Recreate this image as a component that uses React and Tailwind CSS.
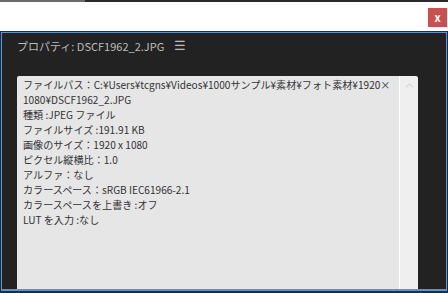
import { ChevronUp } from "lucide-react";

const lines = [
    "ファイルパス：C:¥Users¥tcgns¥Videos¥1000サンプル¥素材¥フォト素材¥1920×",
    "1080¥DSCF1962_2.JPG",
    "種類 :JPEG ファイル",
    "ファイルサイズ :191.91 KB",
    "画像のサイズ：1920 x 1080",
    "ピクセル縦横比：1.0",
    "アルファ：なし",
    "カラースペース：sRGB IEC61966-2.1",
    "カラースペースを上書き :オフ",
    "LUT を入力 :なし",
]

const App = () => {
    return (
        <div className="w-[448px] h-[293px] flex flex-col bg-white overflow-hidden" style={{ fontFamily: '"Noto Sans CJK JP", "Noto Sans", sans-serif' }}>
            {/* top strip */}
            <div className="h-[2px] flex">
                <div className="w-[85px] bg-[#6a6a6a]"></div>
                <div className="flex-1 bg-[#2a2a2a]"></div>
            </div>
            <div className="h-[29px] flex justify-end items-start pt-[6px] pr-[1px]">
                <div className="w-[19px] h-[19px] bg-[#c9504f] text-white text-[11px] font-bold flex items-center justify-center leading-none">x</div>
            </div>
            {/* panel */}
            <div className="flex-1 bg-[#18304a] p-[1px] pb-[2px] flex flex-col min-h-0">
                <div className="flex-1 border border-b-2 border-[#5e94c8] bg-[#222222] flex flex-col min-h-0">
                    <div className="h-[43px] flex items-start pl-[15px] pt-[5px] gap-[10px] text-[11px] text-[#bdbdbd]">
                        <span>プロパティ: DSCF1962_2.JPG</span>
                        <span className="text-[13px] leading-[15px] -mt-[1px]">☰</span>
                    </div>
                    <div className="flex-1 flex min-h-0">
                        <div className="ml-[15px] w-[401px] flex bg-[#e6e6e6] rounded-tr-[3px] rounded-tl-[2px]">
                            <div className="flex-1 pl-[6px] pt-[1px] text-[10.1px] leading-[15px] text-[#333333] overflow-hidden">
                                {lines.map((line, i) => (
                                    <div key={i} className="whitespace-nowrap">{line}</div>
                                ))}
                            </div>
                            <div className="w-[19px] border-l border-white bg-[#efefef] rounded-tr-[3px] flex justify-center pt-[3px]">
                                <ChevronUp size={13} strokeWidth={1.5} color="#c0c0c0" />
                            </div>
                        </div>
                    </div>
                </div>
            </div>
        </div>
    )
}

export default App;
